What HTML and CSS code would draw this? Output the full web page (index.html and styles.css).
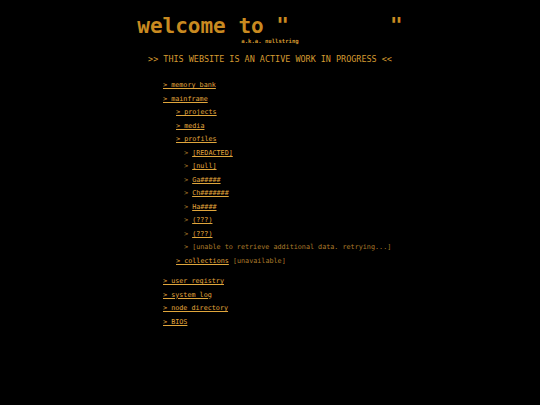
FILE: index.html
```html
<!DOCTYPE html>
<html>
<head>
<meta charset="utf-8">
<link rel="stylesheet" href="styles.css">
</head>
<body>
<div class="page">
  <h1 class="title">welcome to "<span class="blank">        </span>"</h1>
  <p class="aka">a.k.a. nullstring</p>
  <p class="banner">&gt;&gt; THIS WEBSITE IS AN ACTIVE WORK IN PROGRESS &lt;&lt;</p>
  <ul class="menu">
    <li><a href="#">&gt; memory bank</a></li>
    <li><a href="#">&gt; mainframe</a>
      <ul class="sub">
        <li><a href="#">&gt; projects</a></li>
        <li><a href="#">&gt; media</a></li>
        <li><a href="#">&gt; profiles</a>
          <ul class="leaf">
            <li><span class="dim">&gt; </span><a href="#">[REDACTED]</a></li>
            <li><span class="dim">&gt; </span><a href="#">[null]</a></li>
            <li><span class="dim">&gt; </span><a href="#">Ga#####</a></li>
            <li><span class="dim">&gt; </span><a href="#">Ch#######</a></li>
            <li><span class="dim">&gt; </span><a href="#">Ha####</a></li>
            <li><span class="dim">&gt; </span><a href="#">(???)</a></li>
            <li><span class="dim">&gt; </span><a href="#">(???)</a></li>
            <li class="dim">&gt; [unable to retrieve additional data. retrying...]</li>
          </ul>
        </li>
        <li><a href="#">&gt; collections</a> <span class="dim">[unavailable]</span></li>
      </ul>
    </li>
  </ul>
  <ul class="menu second">
    <li><a href="#">&gt; user registry</a></li>
    <li><a href="#">&gt; system log</a></li>
    <li><a href="#">&gt; node directory</a></li>
    <li><a href="#">&gt; BIOS</a></li>
  </ul>
</div>
</body>
</html>
```
FILE: styles.css
```css
html, body {
  margin: 0;
  padding: 0;
  background: #000;
}
body {
  font-family: "DejaVu Sans Mono", monospace;
  color: #c98a20;
  width: 540px;
  height: 405px;
  overflow: hidden;
}
.page {
  display: flex;
  flex-direction: column;
  align-items: center;
}
.title {
  margin: 16px 0 0 0;
  font-size: 21px;
  line-height: 21px;
  font-weight: bold;
  color: #c98a20;
  white-space: pre;
}
.aka {
  margin: 1px 0 0 0;
  font-size: 5.6px;
  line-height: 7px;
  font-weight: bold;
  color: #d49a30;
}
.banner {
  margin: 7.5px 0 0 0;
  font-size: 8.45px;
  line-height: 12px;
  color: #d49a30;
}
.menu {
  list-style: none;
  margin: 14.5px 0 0 0;
  padding: 0 0 0 163px;
  align-self: stretch;
  font-size: 6.75px;
  line-height: 13.5px;
}
.menu.second {
  margin-top: 7px;
}
.menu ul {
  list-style: none;
  margin: 0;
  padding: 0;
}
.sub {
  padding-left: 13px !important;
}
.leaf {
  padding-left: 8px !important;
}
a {
  color: #e0a63c;
  text-decoration: underline;
}
.dim {
  color: #ad7c2a;
}
```
